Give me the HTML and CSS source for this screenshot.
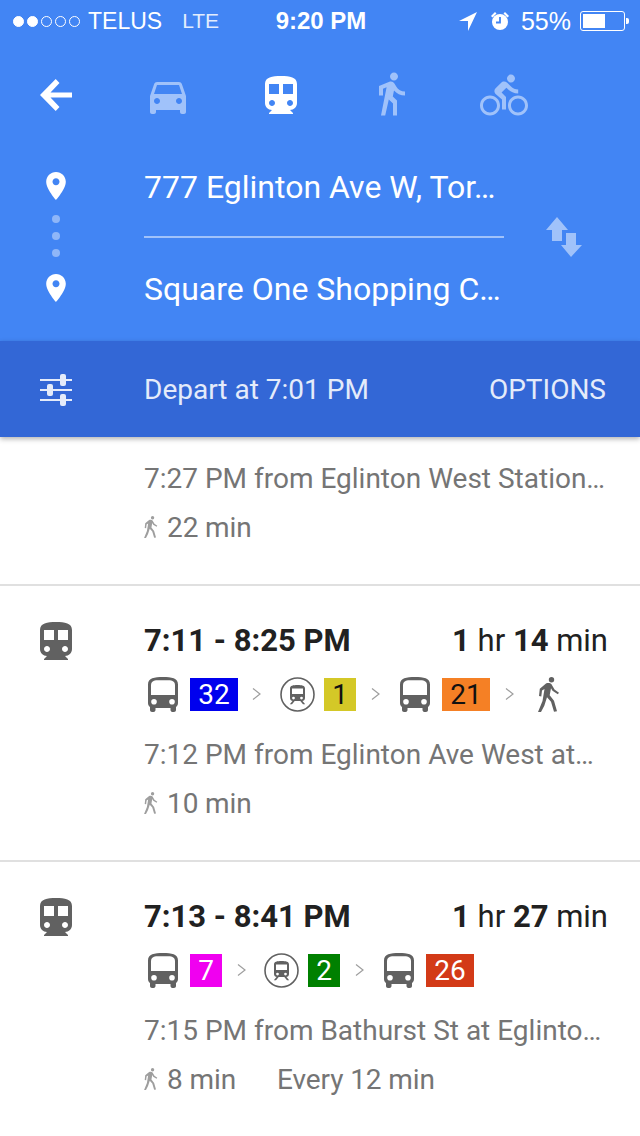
FILE: index.html
```html
<!DOCTYPE html>
<html lang="en">
<head>
<meta charset="utf-8">
<title>Directions</title>
<link rel="stylesheet" href="styles.css">
</head>
<body>
<svg class="sprite" xmlns="http://www.w3.org/2000/svg">
  <symbol id="train" viewBox="4 2 16 19"><path d="M12 2c-4.42 0-8 .5-8 4v9.5C4 17.43 5.57 19 7.5 19L6 20.5v.5h12v-.5L16.5 19c1.93 0 3.5-1.57 3.5-3.5V6c0-3.5-3.58-4-8-4zM7.5 17c-.83 0-1.5-.67-1.5-1.5S6.67 14 7.5 14s1.5.67 1.5 1.5S8.33 17 7.5 17zm3.5-6H6V6h5v5zm5.5 6c-.83 0-1.5-.67-1.5-1.5s.67-1.5 1.5-1.5 1.5.67 1.5 1.5-.67 1.5-1.5 1.5zm1.5-6h-5V6h5v5z"/></symbol>
  <symbol id="car" viewBox="3 5 18 16"><path d="M18.92 6.01C18.72 5.42 18.16 5 17.5 5h-11c-.66 0-1.21.42-1.42 1.01L3 12v8c0 .55.45 1 1 1h1c.55 0 1-.45 1-1v-1h12v1c0 .55.45 1 1 1h1c.55 0 1-.45 1-1v-8l-2.08-5.99zM6.5 16c-.83 0-1.5-.67-1.5-1.5S5.67 13 6.5 13s1.5.67 1.5 1.5S7.33 16 6.5 16zm11 0c-.83 0-1.5-.67-1.5-1.5s.67-1.5 1.5-1.5 1.5.67 1.5 1.5-.67 1.5-1.5 1.5zM5 11l1.5-4.5h11L19 11H5z"/></symbol>
  <symbol id="walk" viewBox="6 1.5 13 21.5"><path d="M13.5 5.5c1.1 0 2-.9 2-2s-.9-2-2-2-2 .9-2 2 .9 2 2 2zM9.8 8.9L7 23h2.1l1.8-8 2.1 2v6h2v-7.5l-2.1-2 .6-3C14.8 12 16.8 13 19 13v-2c-1.9 0-3.500-1-4.300-2.400l-1-1.600c-.4-.6-1-1-1.700-1-.3 0-.5.1-.8.1L6 8.300V13h2V9.600l1.800-.7"/></symbol>
  <symbol id="walkleg" viewBox="0 0 22 35"><path d="M13.500 0a2.700 2.700 0 1 1 0 5.400 2.700 2.700 0 0 1 0-5.400zM8 6.500c1.500-.7 4.500-.7 5.500.8l3 5.200 4.500 3.200-1.200 1.600-5.300-3.500-1.500-2.500-1.300 7 4.300 5.500 3 10.400-3 .6-3-10-4-4.500-2.700 8.500L3 35H0l4.500-11 2-12-2.500 1.500-.7 6-2.300-.4.800-7.400z"/></symbol>
  <symbol id="pin" viewBox="5 2 14 20"><path d="M12 2C8.13 2 5 5.13 5 9c0 5.25 7 13 7 13s7-7.75 7-13c0-3.87-3.13-7-7-7zm0 9.500c-1.380 0-2.500-1.120-2.500-2.500s1.120-2.500 2.500-2.500 2.500 1.120 2.500 2.500-1.120 2.500-2.500 2.500z"/></symbol>
  <symbol id="bike" viewBox="0 1.5 24 20.5"><path d="M15.5 5.5c1.1 0 2-.9 2-2s-.9-2-2-2-2 .9-2 2 .9 2 2 2zM5 12c-2.8 0-5 2.2-5 5s2.2 5 5 5 5-2.2 5-5-2.2-5-5-5zm0 8.5c-1.9 0-3.5-1.6-3.5-3.5s1.6-3.5 3.5-3.5 3.5 1.6 3.5 3.5-1.6 3.5-3.5 3.5zm5.8-10l2.4-2.4.8.8c1.3 1.3 3 2.1 5.1 2.1V9c-1.5 0-2.7-.6-3.6-1.5l-1.9-1.9c-.5-.4-1-.6-1.6-.6s-1.1.2-1.4.6L7.8 8.4c-.4.4-.6.9-.6 1.4 0 .6.2 1.1.6 1.4L11 14v5h2v-6.2l-2.2-2.3zM19 12c-2.8 0-5 2.2-5 5s2.2 5 5 5 5-2.2 5-5-2.2-5-5-5zm0 8.5c-1.9 0-3.5-1.6-3.5-3.5s1.6-3.5 3.5-3.5 3.5 1.6 3.5 3.5-1.6 3.5-3.5 3.5z"/></symbol>
  <symbol id="bus" viewBox="0 0 30 35"><path d="M15 0C6.500 0 0 1 0 7.500V26c0 1.700.7 3.100 2 4.100V33c0 1.100.9 2 2 2h1.500c1.100 0 2-.9 2-2v-2h15v2c0 1.100.9 2 2 2H26c1.100 0 2-.9 2-2v-2.900c1.300-1 2-2.400 2-4.100V7.500C30 1 23.500 0 15 0zM6 27.500a2.800 2.800 0 1 1 0-5.600 2.800 2.800 0 0 1 0 5.600zm18 0a2.800 2.800 0 1 1 0-5.600 2.800 2.800 0 0 1 0 5.600zM27 18H3V8c0-3 2-4.500 5-4.800h14c3 .3 5 1.800 5 4.800z"/></symbol>
  <symbol id="ctrain" viewBox="0 0 35 35"><circle cx="17.500" cy="17.500" r="16.500" fill="none" stroke="currentColor" stroke-width="1.600"/><path d="M17.500 8c-4.500 0-7.500.5-7.500 3.500V21c0 1.700 1.300 3 3 3h9c1.700 0 3-1.300 3-3v-9.500c0-3-3-3.500-7.500-3.500zM13.500 22.500a1.400 1.400 0 1 1 0-2.800 1.400 1.400 0 0 1 0 2.800zm8 0a1.400 1.400 0 1 1 0-2.800 1.400 1.400 0 0 1 0 2.800zM23 17H12v-5.500h11z"/><path d="M12.500 24h2.200L12 27.200H9.800zM20.300 24h2.200l2.700 3.200H23z"/></symbol>
</svg>

<header class="top">
  <div class="status">
    <div class="status-left">
      <span class="signal"><i class="dot on"></i><i class="dot on"></i><i class="dot"></i><i class="dot"></i><i class="dot"></i></span>
      <span class="carrier">TELUS</span>
      <span class="net">LTE</span>
    </div>
    <div class="clock">9:20 PM</div>
    <div class="status-right">
      <svg class="st-loc" viewBox="0 0 18 19"><path d="M18 0L0 9h9v10z"/></svg>
      <svg class="st-alarm" viewBox="0 0 20 20"><circle cx="10" cy="11" r="8"/><path d="M1 5l4-4 1.500 1.500-4 4zM19 5l-4-4-1.500 1.500 4 4z"/><path class="st-hand" d="M10 6v5.500H6" /></svg>
      <span class="pct">55%</span>
      <span class="battery"><span class="battery-level"></span></span>
      <span class="battery-nub"></span>
    </div>
  </div>

  <nav class="modes">
    <svg class="back" viewBox="0 0 32 32"><path d="M32 13.500H10.500l9-9.500L15.700 0 0 16l15.700 16 3.800-4-9-9.500H32z"/></svg>
    <svg class="mode mode-car"><use href="#car"/></svg>
    <svg class="mode mode-train"><use href="#train"/></svg>
    <svg class="mode mode-walk"><use href="#walk"/></svg>
    <svg class="mode mode-bike"><use href="#bike"/></svg>
  </nav>

  <section class="route">
    <div class="route-marks">
      <svg class="pin"><use href="#pin"/></svg>
      <div class="dots"><i></i><i></i><i></i></div>
      <svg class="pin"><use href="#pin"/></svg>
    </div>
    <div class="route-fields">
      <div class="field">777 Eglinton Ave W, Tor…</div>
      <div class="field-rule"></div>
      <div class="field">Square One Shopping C…</div>
    </div>
    <svg class="swap" viewBox="0 0 36 40"><path d="M11 0l11 13h-6v11H6V13H0zM20 16h10v12h6L25 40 15 28h5z"/></svg>
  </section>
</header>

<div class="depart">
  <svg class="sliders" viewBox="0 0 32 33"><path d="M0 6h32v2H0zM0 16h32v2H0zM0 26h32v2H0z"/><rect x="20" y="1" width="6" height="12" rx="2"/><rect x="7" y="11" width="6" height="12" rx="2"/><rect x="20" y="21" width="6" height="12" rx="2"/></svg>
  <span class="depart-time">Depart at 7:01 PM</span>
  <span class="options">OPTIONS</span>
</div>

<main class="list">
  <article class="trip">
    <div class="trip-icon-col"></div>
    <div class="trip-body trip-body-partial">
      <div class="detail detail-first">7:27 PM from Eglinton West Station…</div>
      <div class="meta"><svg class="walk-sm"><use href="#walkleg"/></svg><span>22 min</span></div>
    </div>
  </article>

  <article class="trip">
    <div class="trip-icon-col"><svg class="trip-icon"><use href="#train"/></svg></div>
    <div class="trip-body">
      <div class="headline"><b class="times">7:11 - 8:25 PM</b><span class="dur"><b>1</b> hr <b>14</b> min</span></div>
      <div class="legs">
        <svg class="bus"><use href="#bus"/></svg>
        <span class="badge w48 blue">32</span>
        <svg class="chev chev-a" viewBox="0 0 9 12"><path d="M1 .5L8 6l-7 5.500"/></svg>
        <svg class="ctrain"><use href="#ctrain"/></svg>
        <span class="badge w32 yellow">1</span>
        <svg class="chev" viewBox="0 0 9 12"><path d="M1 .5L8 6l-7 5.500"/></svg>
        <svg class="bus"><use href="#bus"/></svg>
        <span class="badge w48 orange">21</span>
        <svg class="chev" viewBox="0 0 9 12"><path d="M1 .5L8 6l-7 5.500"/></svg>
        <svg class="walk-leg"><use href="#walkleg"/></svg>
      </div>
      <div class="detail">7:12 PM from Eglinton Ave West at…</div>
      <div class="meta"><svg class="walk-sm"><use href="#walkleg"/></svg><span>10 min</span></div>
    </div>
  </article>

  <article class="trip">
    <div class="trip-icon-col"><svg class="trip-icon"><use href="#train"/></svg></div>
    <div class="trip-body">
      <div class="headline"><b class="times">7:13 - 8:41 PM</b><span class="dur"><b>1</b> hr <b>27</b> min</span></div>
      <div class="legs">
        <svg class="bus"><use href="#bus"/></svg>
        <span class="badge w32 magenta">7</span>
        <svg class="chev chev-c" viewBox="0 0 9 12"><path d="M1 .5L8 6l-7 5.500"/></svg>
        <svg class="ctrain"><use href="#ctrain"/></svg>
        <span class="badge w32 green">2</span>
        <svg class="chev" viewBox="0 0 9 12"><path d="M1 .5L8 6l-7 5.500"/></svg>
        <svg class="bus"><use href="#bus"/></svg>
        <span class="badge w48 red">26</span>
      </div>
      <div class="detail">7:15 PM from Bathurst St at Eglinto…</div>
      <div class="meta"><svg class="walk-sm"><use href="#walkleg"/></svg><span>8 min</span><span class="every">Every 12 min</span></div>
    </div>
  </article>
</main>
</body>
</html>
```
FILE: styles.css
```css
* { box-sizing: border-box; }
html, body { margin: 0; padding: 0; }
body {
  width: 640px;
  height: 1136px;
  overflow: hidden;
  background: #fff;
  font-family: Roboto, "Liberation Sans", sans-serif;
}
svg { display: block; fill: currentColor; flex: none; }
.sprite { display: none; }

.top { background: #4285f4; height: 341px; color: #fff; }

.status {
  height: 42px;
  display: grid;
  grid-template-columns: 1fr auto 1fr;
  align-items: center;
  font-family: "Liberation Sans", Arial, sans-serif;
  font-size: 23px;
  padding: 0 11px 0 13px;
}
.status-left, .status-right { display: flex; align-items: center; }
.status-right { justify-content: flex-end; }
.signal { display: flex; gap: 3px; margin-right: 8px; }
.dot { width: 11px; height: 11px; border-radius: 50%; border: 1px solid #fff; display: block; }
.dot.on { background: #fff; }
.carrier { margin-right: 20px; }
.net { font-size: 21px; font-weight: 400; opacity: .85; }
.clock { font-weight: 700; font-size: 24px; }
.st-loc { width: 18px; height: 19px; margin-right: 13px; }
.st-alarm { width: 20px; height: 20px; margin-right: 11px; }
.st-hand { fill: none; stroke: #4285f4; stroke-width: 1.800; }
.pct { margin-right: 9px; font-size: 25px; }
.battery { width: 45px; height: 20px; border: 1px solid #fff; border-radius: 3px; padding: 2px; display: block; }
.battery-level { display: block; width: 22px; height: 100%; background: #fff; }
.battery-nub { width: 3px; height: 6px; background: #fff; margin-left: 1px; border-radius: 0 2px 2px 0; }

.modes { height: 74px; padding-left: 40px; display: flex; align-items: flex-end; }
.back { width: 32px; height: 32px; margin-bottom: 5px; }
.mode { color: #a0c2fa; }
.mode-car { width: 36px; height: 32px; margin: 0 0 2px 78px; }
.mode-train { width: 34px; height: 38px; margin: 0 0 2px 78px; color: #fff; }
.mode-walk { width: 26px; height: 44px; margin-left: 81px; }
.mode-bike { width: 48px; height: 42px; margin-left: 75px; }

.route { display: flex; align-items: flex-start; padding: 46px 0 0 46px; }
.route-marks { width: 20px; margin-top: 10px; margin-right: 78px; display: flex; flex-direction: column; align-items: center; }
.pin { width: 20px; height: 28px; color: #fff; }
.dots { display: flex; flex-direction: column; gap: 9px; margin: 15px 0 17px; }
.dots i { display: block; width: 8px; height: 8px; border-radius: 50%; background: #8fb6f8; }
.route-fields { width: 360px; }
.field { height: 50px; line-height: 50px; font-size: 32px; white-space: nowrap; }
.field-rule { height: 2px; background: #a0c2fa; margin: 24px 0 26px; }
.swap { width: 36px; height: 40px; margin: 55px 0 0 42px; color: #a0c2fa; }

.depart {
  height: 96px;
  background: #3367d6;
  color: #e4ebfa;
  display: flex;
  align-items: center;
  padding: 0 34px 0 40px;
  font-size: 28px;
  position: relative;
  box-shadow: 0 2px 5px rgba(0, 0, 0, .3);
}
.sliders { width: 32px; height: 33px; margin-right: 72px; }
.options { margin-left: auto; }

.trip { display: flex; padding: 0 32px 39px 40px; border-bottom: 2px solid #e0e0e0; }
.trip-icon-col { width: 104px; flex: none; }
.trip-icon { width: 32px; height: 38px; margin-top: 36px; color: #616161; }
.trip-body { flex: 1; min-width: 0; padding-top: 35px; }
.trip-body-partial { padding-top: 24px; }

.headline { display: flex; justify-content: space-between; height: 40px; line-height: 40px; font-size: 31px; color: #212121; }
.headline b { font-weight: 700; }
.dur { font-weight: 400; }

.legs { display: flex; align-items: center; height: 36px; margin: 15px 0 0 4px; }
.bus { width: 30px; height: 35px; color: #616161; margin-right: 12px; }
.ctrain { width: 35px; height: 35px; color: #616161; margin-right: 9px; }
.chev { width: 9px; height: 12px; margin: 0 20px 0 15px; fill: none; stroke: #9e9e9e; stroke-width: 1.200; }
.chev-a { margin: 0 19px 0 14px; }
.chev-c { margin: 0 18px 0 15px; }
.walk-leg { width: 22px; height: 35px; margin-left: 4px; color: #616161; }
.badge { height: 33px; line-height: 33px; text-align: center; font-size: 28px; color: #fff; display: block; }
.w48 { width: 48px; }
.w32 { width: 32px; }
.blue { background: #0000ee; }
.yellow { background: #d4c827; color: #111; }
.orange { background: #f58025; color: #111; }
.magenta { background: #f000f0; }
.green { background: #008000; }
.red { background: #d33a17; }

.detail { height: 36px; line-height: 36px; margin-top: 25px; font-size: 28px; color: #757575; white-space: nowrap; }
.detail-first { margin-top: 0; }
.meta { display: flex; align-items: center; height: 36px; margin-top: 12px; font-size: 28px; letter-spacing: -.1px; color: #757575; }
.walk-sm { width: 14px; height: 22px; margin-right: 9px; color: #9e9e9e; }
.every { margin-left: 41px; }
```
